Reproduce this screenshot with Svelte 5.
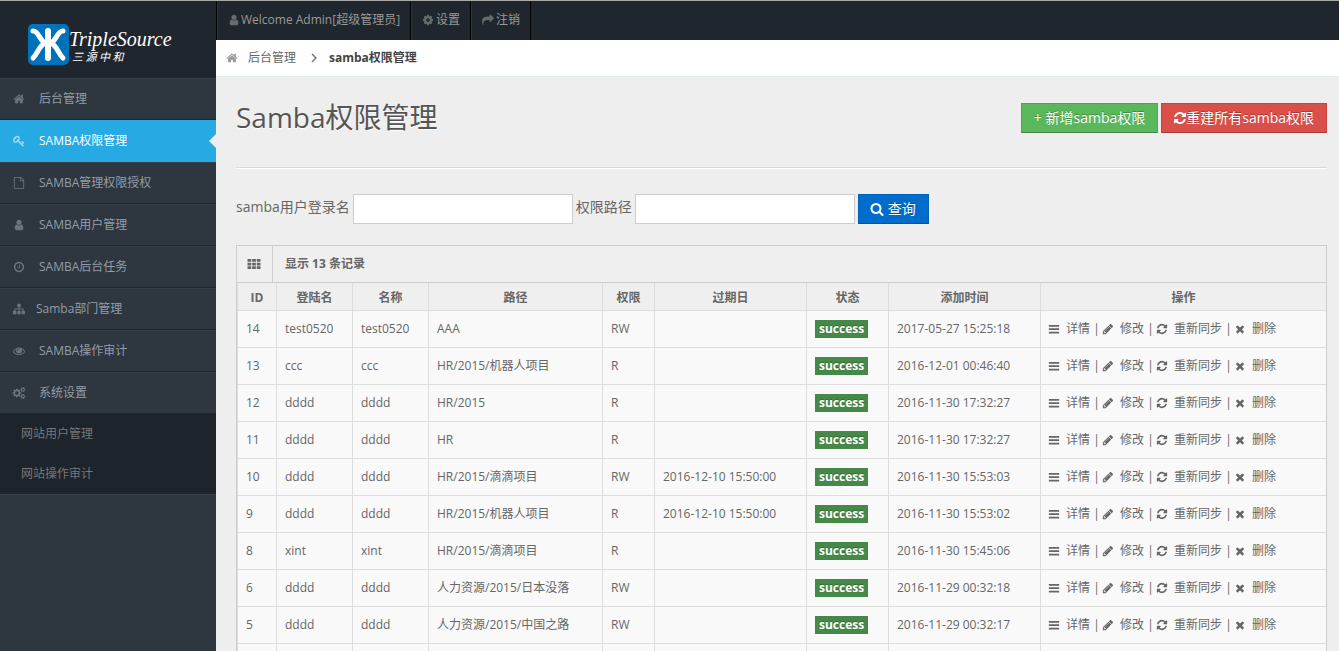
<script>
  const icons = {
    home: 'M1472 992v480q0 26-19 45t-45 19h-384v-384h-256v384h-384q-26 0-45-19t-19-45v-480q0-1 .5-3t.5-3l575-474 575 474q1 2 1 6zm223-69l-62 74q-8 9-21 11h-3q-13 0-21-7l-692-577-692 577q-12 8-24 7-13-2-21-11l-62-74q-8-10-7-23.5t11-21.5l719-599q32-26 76-26t76 26l244 204v-195q0-14 9-23t23-9h192q14 0 23 9t9 23v408l219 182q10 8 11 21.5t-7 23.5z',
    user: 'M1536 1399q0 109-62.5 187t-150.5 78h-854q-88 0-150.5-78t-62.5-187q0-85 8.5-160.5t31.5-152 58.5-131 94-89 134.5-34.5q131 128 313 128t313-128q76 0 134.5 34.5t94 89 58.5 131 31.5 152 8.5 160.5zm-256-887q0 159-112.5 271.5t-271.5 112.5-271.5-112.5-112.5-271.5 112.5-271.5 271.5-112.5 271.5 112.5 112.5 271.5z',
    key: 'M832 512q0-80-56-136t-136-56-136 56-56 136q0 42 19 83-41-19-83-19-80 0-136 56t-56 136 56 136 136 56 136-56 56-136q0-42-19-83 41 19 83 19 80 0 136-56t56-136zm851 704q0 17-49 66t-66 49q-9 0-28.5-16t-36.5-33-38.5-40-24.5-26l-96 96 220 220q28 28 28 68 0 42-39 81t-81 39q-40 0-68-28l-671-671q-176 131-365 131-163 0-265.5-102.5t-102.5-265.5q0-160 95-313t248-248 313-95q163 0 265.5 102.5t102.5 265.5q0 189-131 365l355 355 96-96q-3-3-26-24.5t-40-38.5-33-36.5-16-28.5q0-17 49-66t66-49q13 0 23 10 6 6 46 44.5t82 79.5 86.5 86 73 78 28.5 41z',
    file: 'M1596 380q28 28 48 76t20 88v1152q0 40-28 68t-68 28h-1344q-40 0-68-28t-28-68v-1600q0-40 28-68t68-28h896q40 0 88 20t76 48zm-444-244v376h376q-10-29-22-41l-313-313q-12-12-41-22zm384 1528v-1024h-416q-40 0-68-28t-28-68v-416h-768v1536h1280z',
    clock: 'M1024 544v448q0 14-9 23t-23 9h-320q-14 0-23-9t-9-23v-64q0-14 9-23t23-9h224v-352q0-14 9-23t23-9h64q14 0 23 9t9 23zm416 352q0-148-73-273t-198-198-273-73-273 73-198 198-73 273 73 273 198 198 273 73 273-73 198-198 73-273zm224 0q0 209-103 385.5t-279.5 279.5-385.5 103-385.5-103-279.5-279.5-103-385.5 103-385.5 279.5-279.5 385.5-103 385.5 103 279.5 279.5 103 385.5z',
    sitemap: 'M1792 1248v320q0 40-28 68t-68 28h-320q-40 0-68-28t-28-68v-320q0-40 28-68t68-28h96v-192h-512v192h96q40 0 68 28t28 68v320q0 40-28 68t-68 28h-320q-40 0-68-28t-28-68v-320q0-40 28-68t68-28h96v-192h-512v192h96q40 0 68 28t28 68v320q0 40-28 68t-68 28h-320q-40 0-68-28t-28-68v-320q0-40 28-68t68-28h96v-192q0-52 38-90t90-38h512v-192h-96q-40 0-68-28t-28-68v-320q0-40 28-68t68-28h320q40 0 68 28t28 68v320q0 40-28 68t-68 28h-96v192h512q52 0 90 38t38 90v192h96q40 0 68 28t28 68z',
    eye: 'M1664 960q-152-236-381-353 61 104 61 225 0 185-131.5 316.5t-316.5 131.5-316.5-131.5-131.5-316.5q0-121 61-225-229 117-381 353 133 205 333.5 326.5t434.5 121.5 434.5-121.5 333.5-326.5zm-720-384q0-20-14-34t-34-14q-125 0-214.5 89.5t-89.5 214.5q0 20 14 34t34 14 34-14 14-34q0-86 61-147t147-61q20 0 34-14t14-34zm848 384q0 34-20 69-140 230-376.5 368.5t-499.5 138.5-499.5-139-376.5-368q-20-35-20-69t20-69q140-229 376.5-368t499.5-139 499.5 139 376.5 368q20 35 20 69z',
    cog: 'M1152 896q0-106-75-181t-181-75-181 75-75 181 75 181 181 75 181-75 75-181zm512-109v222q0 12-8 23t-20 13l-185 28q-19 54-39 91 35 50 107 138 10 12 10 25t-9 23q-27 37-99 108t-94 71q-12 0-26-9l-138-108q-44 23-91 38-16 136-29 186-7 28-36 28h-222q-14 0-24.5-8.5t-11.5-21.5l-28-184q-49-16-90-37l-141 107q-10 9-25 9-14 0-25-11-126-114-165-168-7-10-7-23 0-12 8-23 15-21 51-66.5t54-70.5q-27-50-41-99l-183-27q-13-2-21-12.5t-8-23.5v-222q0-12 8-23t19-13l186-28q14-46 39-92-40-57-107-138-10-12-10-24 0-10 9-23 26-36 98.5-107.5t94.5-71.5q13 0 26 10l138 107q44-23 91-38 16-136 29-186 7-28 36-28h222q14 0 24.5 8.5t11.5 21.5l28 184q49 16 90 37l142-107q9-9 24-9 13 0 25 10 129 119 165 170 7 8 7 22 0 12-8 23-15 21-51 66.5t-54 70.5q26 50 41 98l183 28q13 2 21 12.5t8 23.5z',
    cogs: 'M832 896q0-106-75-181t-181-75-181 75-75 181 75 181 181 75 181-75 75-181zm768 512q0-52-38-90t-90-38-90 38-38 90q0 53 37.5 90.5t90.5 37.5 90.5-37.5 37.5-90.5zm0-1024q0-52-38-90t-90-38-90 38-38 90q0 53 37.5 90.5t90.5 37.5 90.5-37.5 37.5-90.5zm-384 421v185q0 10-7 19.5t-16 10.5l-155 24q-11 35-32 76 34 48 90 115 7 11 7 20 0 12-7 19-23 30-82.5 89.5t-78.5 59.5q-11 0-21-7l-115-90q-37 19-77 31-11 108-23 155-7 24-30 24h-186q-11 0-20-7.5t-10-17.5l-23-153q-34-10-75-31l-118 89q-7 7-20 7-11 0-21-8-144-133-144-160 0-9 7-19 10-14 41-53t47-61q-23-44-35-82l-152-24q-10-1-17-9.5t-7-19.5v-185q0-10 7-19.5t16-10.5l155-24q11-35 32-76-34-48-90-115-7-11-7-20 0-12 7-20 22-30 82-89t79-59q11 0 21 7l115 90q34-18 77-32 11-108 23-154 7-24 30-24h186q11 0 20 7.5t10 17.5l23 153q34 10 75 31l118-89q8-7 20-7 11 0 21 8 144 133 144 160 0 8-7 19-12 16-42 54t-45 60q23 48 34 82l152 23q10 2 17 10.5t7 19.5zm640 533v140q0 16-149 31-12 27-30 52 51 113 51 138 0 4-4 7-122 71-124 71-8 0-46-47t-52-68q-20 2-30 2t-30-2q-14 21-52 68t-46 47q-2 0-124-71-4-3-4-7 0-25 51-138-18-25-30-52-149-15-149-31v-140q0-16 149-31 13-29 30-52-51-113-51-138 0-4 4-7 4-2 35-20t59-34 30-16q8 0 46 46.5t52 67.5q20-2 30-2t30 2q51-71 92-112l6-2q4 0 124 70 4 3 4 7 0 25-51 138 17 23 30 52 149 15 149 31zm0-1024v140q0 16-149 31-12 27-30 52 51 113 51 138 0 4-4 7-122 71-124 71-8 0-46-47t-52-68q-20 2-30 2t-30-2q-14 21-52 68t-46 47q-2 0-124-71-4-3-4-7 0-25 51-138-18-25-30-52-149-15-149-31v-140q0-16 149-31 13-29 30-52-51-113-51-138 0-4 4-7 4-2 35-20t59-34 30-16q8 0 46 46.5t52 67.5q20-2 30-2t30 2q51-71 92-112l6-2q4 0 124 70 4 3 4 7 0 25-51 138 17 23 30 52 149 15 149 31z',
    share: 'M1792 640q0 26-19 45l-512 512q-19 19-45 19t-45-19-19-45v-256h-224q-98 0-175.5 6t-154 21.5-133 42.5-105.5 69.5-80 101-48.5 138.5-17.5 181q0 55 5 123 0 6 2.5 23.5t2.5 26.5q0 15-8.5 25t-23.5 10q-16 0-28-17-7-9-13-22t-13.5-30-10.5-24q-127-285-127-451 0-199 53-333 162-403 875-403h224v-256q0-26 19-45t45-19 45 19l512 512q19 19 19 45z',
    refresh: 'M1639 1056q0 5-1 7-64 268-268 434.5t-478 166.5q-146 0-282.5-55t-243.5-157l-129 129q-19 19-45 19t-45-19-19-45v-448q0-26 19-45t45-19h448q26 0 45 19t19 45-19 45l-137 137q71 66 161 102t187 36q134 0 250-65t186-179q11-17 53-117 8-23 30-23h192q13 0 22.5 9.5t9.5 22.5zm25-800v448q0 26-19 45t-45 19h-448q-26 0-45-19t-19-45 19-45l138-138q-148-137-349-137-134 0-250 65t-186 179q-11 17-53 117-8 23-30 23h-199q-13 0-22.5-9.5t-9.5-22.5v-7q65-268 270-434.5t480-166.5q146 0 284 55.5t245 156.5l130-129q19-19 45-19t45 19 19 45z',
    search: 'M1216 832q0-185-131.5-316.5t-316.5-131.5-316.5 131.5-131.5 316.5 131.5 316.5 316.5 131.5 316.5-131.5 131.5-316.5zm512 832q0 52-38 90t-90 38q-54 0-90-38l-343-342q-179 124-399 124-143 0-273.5-55.5t-225-150-150-225-55.5-273.5 55.5-273.5 150-225 225-150 273.5-55.5 273.5 55.5 225 150 150 225 55.5 273.5q0 220-124 399l343 343q37 37 37 90z',
    pencil: 'M491 1536l91-91-235-235-91 91v107h128v128h107zm523-928q0-22-22-22-10 0-17 7l-542 542q-7 7-7 17 0 22 22 22 10 0 17-7l542-542q7-7 7-17zm-54-192l416 416-832 832h-416v-416zm683 96q0 53-37 90l-166 166-416-416 166-165q36-38 90-38 53 0 91 38l235 234q37 39 37 91z',
    times: 'M1490 1322q0 40-28 68l-136 136q-28 28-68 28t-68-28l-294-294-294 294q-28 28-68 28t-68-28l-136-136q-28-28-28-68t28-68l294-294-294-294q-28-28-28-68t28-68l136-136q28-28 68-28t68 28l294 294 294-294q28-28 68-28t68 28l136 136q28 28 28 68t-28 68l-294 294 294 294q28 28 28 68z',
    bars: 'M128 288h1536v256h-1536zM128 800h1536v256h-1536zM128 1312h1536v256h-1536z',
    th: 'M64 256h480v352h-480zM656 256h480v352h-480zM1248 256h480v352h-480zM64 720h480v352h-480zM656 720h480v352h-480zM1248 720h480v352h-480zM64 1184h480v352h-480zM656 1184h480v352h-480zM1248 1184h480v352h-480z'
  };

  const menu = [
    { icon: 'home', text: '后台管理' },
    { icon: 'key', text: 'SAMBA权限管理', active: true },
    { icon: 'file', text: 'SAMBA管理权限授权' },
    { icon: 'user', text: 'SAMBA用户管理' },
    { icon: 'clock', text: 'SAMBA后台任务' },
    { icon: 'sitemap', text: 'Samba部门管理', tight: true },
    { icon: 'eye', text: 'SAMBA操作审计' },
    { icon: 'cogs', text: '系统设置', children: ['网站用户管理', '网站操作审计'] }
  ];

  const columns = ['ID', '登陆名', '名称', '路径', '权限', '过期日', '状态', '添加时间', '操作'];

  const rows = [
    { id: 14, login: 'test0520', path: 'AAA', perm: 'RW', expire: '', added: '2017-05-27 15:25:18' },
    { id: 13, login: 'ccc', path: 'HR/2015/机器人项目', perm: 'R', expire: '', added: '2016-12-01 00:46:40' },
    { id: 12, login: 'dddd', path: 'HR/2015', perm: 'R', expire: '', added: '2016-11-30 17:32:27' },
    { id: 11, login: 'dddd', path: 'HR', perm: 'R', expire: '', added: '2016-11-30 17:32:27' },
    { id: 10, login: 'dddd', path: 'HR/2015/滴滴项目', perm: 'RW', expire: '2016-12-10 15:50:00', added: '2016-11-30 15:53:03' },
    { id: 9, login: 'dddd', path: 'HR/2015/机器人项目', perm: 'R', expire: '2016-12-10 15:50:00', added: '2016-11-30 15:53:02' },
    { id: 8, login: 'xint', path: 'HR/2015/滴滴项目', perm: 'R', expire: '', added: '2016-11-30 15:45:06' },
    { id: 6, login: 'dddd', path: '人力资源/2015/日本没落', perm: 'RW', expire: '', added: '2016-11-29 00:32:18' },
    { id: 5, login: 'dddd', path: '人力资源/2015/中国之路', perm: 'RW', expire: '', added: '2016-11-29 00:32:17' }
  ];

  let loginName = $state('');
  let sharePath = $state('');
</script>

{#snippet icon(name)}
  <svg class="icon" viewBox="0 0 1792 1792" aria-hidden="true"><path d={icons[name]} /></svg>
{/snippet}

<div class="page">
  <aside class="sidebar">
    <a href="#top" class="logo">
      <svg class="logo-mark" viewBox="0 0 41 41" aria-hidden="true">
        <rect width="41" height="41" rx="5" fill="#0072bc" />
        <g fill="none" stroke="#fff" stroke-width="5" stroke-linecap="round" stroke-linejoin="round">
          <path d="M20 7v27" stroke-width="6" />
          <path d="M5 7c6 0 6 9 12 12c-6 3-7 10-12 15" />
          <path d="M35 7c-6 0-6 9-12 12c6 3 7 10 12 15" />
        </g>
      </svg>
      <span class="logo-text">
        <span class="logo-name">TripleSource</span>
        <span class="logo-sub">三 源 中 和</span>
      </span>
    </a>
    <ul class="menu">
      {#each menu as item}
        <li class:active={item.active} class:open={item.children}>
          <a href="#menu" class:tight={item.tight}>{@render icon(item.icon)}<span>{item.text}</span></a>
          {#if item.children}
            <ul class="submenu">
              {#each item.children as child}
                <li><a href="#menu">{child}</a></li>
              {/each}
            </ul>
          {/if}
        </li>
      {/each}
    </ul>
  </aside>

  <div class="main">
    <nav class="user-nav">
      <a href="#profile">{@render icon('user')}Welcome Admin[超级管理员]</a>
      <a href="#settings" class="spaced">{@render icon('cog')}设置</a>
      <a href="#logout" class="spaced">{@render icon('share')}注销</a>
    </nav>

    <div class="breadcrumb">
      <a href="#home">{@render icon('home')}后台管理</a>
      <svg class="chevron" viewBox="0 0 6 10" aria-hidden="true"><path d="M1 1l4 4-4 4" /></svg>
      <a href="#current" class="current">samba权限管理</a>
    </div>

    <div class="content">
      <header class="content-header">
        <h1>Samba权限管理</h1>
        <div class="buttons">
          <button type="button" class="btn btn-success">+ 新增samba权限</button>
          <button type="button" class="btn btn-danger">{@render icon('refresh')}重建所有samba权限</button>
        </div>
      </header>
      <hr />

      <form class="search" onsubmit={(e) => e.preventDefault()}>
        <label for="login-name">samba用户登录名</label>
        <input id="login-name" type="text" bind:value={loginName} />
        <label for="share-path">权限路径</label>
        <input id="share-path" type="text" bind:value={sharePath} />
        <button type="submit" class="btn btn-primary">{@render icon('search')}<span>查询</span></button>
      </form>

      <section class="widget">
        <div class="widget-title">
          <span class="widget-icon">{@render icon('th')}</span>
          <h5>显示 13 条记录</h5>
        </div>
        <table>
          <colgroup>
            <col class="c-id" />
            <col class="c-name" />
            <col class="c-name" />
            <col class="c-path" />
            <col class="c-perm" />
            <col class="c-date" />
            <col class="c-state" />
            <col class="c-date" />
            <col />
          </colgroup>
          <thead>
            <tr>
              {#each columns as column}
                <th>{column}</th>
              {/each}
            </tr>
          </thead>
          <tbody>
            {#each rows as row}
              <tr>
                <td>{row.id}</td>
                <td>{row.login}</td>
                <td>{row.login}</td>
                <td>{row.path}</td>
                <td>{row.perm}</td>
                <td>{row.expire}</td>
                <td><span class="label">success</span></td>
                <td>{row.added}</td>
                <td class="actions">
                  <a href="#detail">{@render icon('bars')} 详情</a> |
                  <a href="#edit">{@render icon('pencil')} 修改</a> |
                  <a href="#sync">{@render icon('refresh')} 重新同步</a> |
                  <a href="#delete">{@render icon('times')} 删除</a>
                </td>
              </tr>
            {/each}
            <tr>
              {#each columns as _}
                <td></td>
              {/each}
            </tr>
          </tbody>
        </table>
      </section>
    </div>
  </div>
</div>

<style>
  :global(body) {
    margin: 0;
    background: #eee;
    color: #666;
    font-family: 'Open Sans', 'Noto Sans CJK SC', sans-serif;
    font-size: 12px;
    line-height: 20px;
  }

  a {
    color: inherit;
    text-decoration: none;
  }

  ul {
    list-style: none;
    margin: 0;
    padding: 0;
  }

  .icon {
    width: 14px;
    height: 12px;
    fill: currentColor;
    flex: none;
  }

  .page {
    display: flex;
    box-sizing: border-box;
    height: 100vh;
    overflow: hidden;
    border-top: 1px solid #aaa;
  }

  /* sidebar */
  .sidebar {
    flex: 0 0 216px;
    background: #2e363f;
  }

  .logo {
    display: flex;
    align-items: flex-start;
    box-sizing: border-box;
    height: 77px;
    padding: 23px 0 0 28px;
    background: #1f262d;
    color: #fff;
  }

  .logo-mark {
    width: 41px;
    height: 41px;
    flex: none;
  }

  .logo-text {
    display: flex;
    flex-direction: column;
    padding-top: 4px;
  }

  .logo-name {
    font: italic 20px/22px 'Liberation Serif', serif;
  }

  .logo-sub {
    padding-left: 3px;
    font: italic 11px/12px 'Noto Sans CJK SC', sans-serif;
  }

  .menu > li {
    border-top: 1px solid #37414b;
    border-bottom: 1px solid #1f262d;
    color: #939da8;
  }

  .menu > li > a {
    display: flex;
    align-items: center;
    gap: 13px;
    height: 40px;
    padding-left: 12px;
  }

  .menu > li > a.tight {
    gap: 10px;
  }

  .menu .icon {
    opacity: 0.6;
  }

  .menu > li.active {
    position: relative;
    background: #27a9e3;
    border-color: #27a9e3;
    color: #fff;
  }

  .menu > li.active::after {
    content: '';
    position: absolute;
    right: 0;
    top: 13px;
    border: 7px solid transparent;
    border-left: 0;
    border-right-color: #eee;
  }

  .menu > li.open {
    border-bottom-color: #37414b;
  }

  .submenu {
    padding-top: 1px;
    background: #1e242b;
    color: #777;
  }

  .submenu a {
    display: block;
    padding: 10px 0 10px 21px;
  }

  /* top bar */
  .main {
    flex: 1;
    min-width: 0;
  }

  .user-nav {
    display: flex;
    height: 39px;
    background: #1f262d;
    border-left: 1px solid #000;
    color: #999;
  }

  .user-nav a {
    display: flex;
    align-items: center;
    padding: 0 10px 2px 9px;
    border-left: 1px solid #2e363f;
    border-right: 1px solid #000;
  }

  .user-nav .spaced .icon {
    margin-right: 1px;
  }

  .user-nav .icon {
    opacity: 0.6;
  }

  .breadcrumb {
    display: flex;
    align-items: center;
    height: 36px;
    padding-left: 9px;
    background: #fff;
    border-bottom: 1px solid #e3ebe8;
  }

  .breadcrumb a {
    display: flex;
    align-items: center;
  }

  .breadcrumb .icon {
    margin-right: 9px;
    color: #999;
  }

  .breadcrumb .current {
    color: #444;
    font-weight: bold;
  }

  .chevron {
    width: 6px;
    height: 10px;
    margin: 0 12px 0 15px;
    fill: none;
    stroke: #777;
    stroke-width: 1.5;
  }

  /* content */
  .content {
    padding: 0 12px 0 20px;
  }

  .content-header {
    display: flex;
    justify-content: space-between;
    align-items: flex-start;
    height: 90px;
  }

  h1 {
    margin: 20px 0 0;
    color: #555;
    font-size: 28px;
    font-weight: normal;
    line-height: 40px;
    text-shadow: 0 1px 0 #fff;
  }

  .buttons {
    display: flex;
    gap: 3px;
    padding-top: 26px;
  }

  .btn {
    display: inline-flex;
    align-items: center;
    box-sizing: border-box;
    height: 30px;
    padding: 0 12px;
    border: 1px solid;
    color: #fff;
    font-family: inherit;
    font-size: 14px;
    line-height: 20px;
    text-shadow: 0 -1px 0 rgba(0, 0, 0, 0.25);
    white-space: nowrap;
    cursor: pointer;
  }

  .btn .icon {
    height: 14px;
    margin: 0 -1px;
  }

  .btn-success {
    background: #5bb75b;
    border-color: #51a351 #51a351 #438643;
  }

  .btn-danger {
    background: #da4f49;
    border-color: #c9453f #c9453f #a93a35;
  }

  .btn-primary {
    gap: 5px;
    background: #006dcc;
    border-color: #0062b8 #0062b8 #0055a0;
  }

  hr {
    margin: 0 0 25px;
    border: 0;
    border-top: 1px solid #d8d8d8;
    border-bottom: 1px solid #fff;
  }

  .search {
    display: flex;
    gap: 3px;
    margin-bottom: 21px;
    font-size: 14px;
  }

  .search label {
    line-height: 26px;
  }

  .search input {
    box-sizing: border-box;
    width: 220px;
    height: 30px;
    padding: 4px 6px;
    border: 1px solid #ccc;
    background: #fff;
    font: inherit;
  }

  /* records */
  .widget {
    border: 1px solid #cdcdcd;
    background: #f9f9f9;
  }

  .widget-title {
    display: flex;
    height: 36px;
    background: #efefef;
    border-bottom: 1px solid #cdcdcd;
  }

  .widget-icon {
    display: flex;
    align-items: center;
    padding: 0 11px 0 10px;
    border-right: 1px solid #cdcdcd;
  }

  .widget-icon .icon {
    height: 14px;
  }

  h5 {
    margin: 0 0 0 12px;
    font-size: 12px;
    line-height: 36px;
  }

  table {
    width: 100%;
    table-layout: fixed;
    border-collapse: separate;
    border-spacing: 0;
  }

  .c-id { width: 39px; }
  .c-name { width: 76px; }
  .c-path { width: 174px; }
  .c-perm { width: 52px; }
  .c-date { width: 152px; }
  .c-state { width: 82px; }

  th,
  td {
    box-sizing: border-box;
    border-left: 1px solid #ddd;
    white-space: nowrap;
  }

  th {
    height: 27px;
    padding: 2px 0 0;
    background: #efefef;
    text-align: center;
  }

  td {
    height: 37px;
    padding: 0 8px;
    border-top: 1px solid #ddd;
    background: #f9f9f9;
  }

  .label {
    display: inline-block;
    padding: 0 4px;
    background: #468847;
    color: #fff;
    font-weight: bold;
    line-height: 18px;
    text-shadow: 0 -1px 0 rgba(0, 0, 0, 0.25);
  }

  .actions .icon {
    margin: 0 2px 0 -2px;
    vertical-align: -2px;
  }
</style>
